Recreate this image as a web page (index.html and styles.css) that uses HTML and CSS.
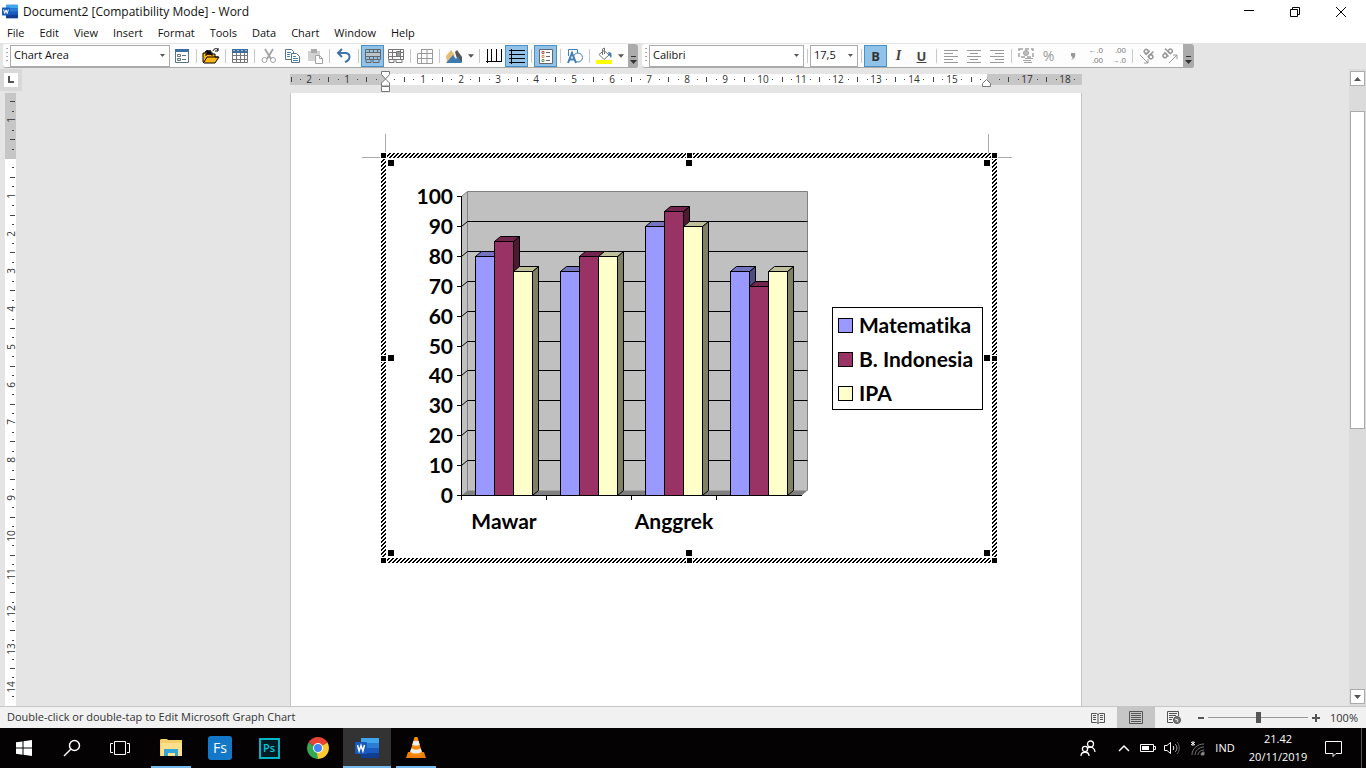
FILE: index.html
```html
<!DOCTYPE html>
<html lang="en">
<head>
<meta charset="utf-8">
<title>Document2 [Compatibility Mode] - Word</title>
<link rel="stylesheet" href="styles.css">
</head>
<body>
<svg class="defs" aria-hidden="true">
  <symbol id="word" viewBox="0 0 24 22">
    <rect x="6" y="1" width="18" height="20" rx="1" fill="#185abd"/>
    <path d="M6 1h18v5H6z" fill="#41a5ee"/><path d="M6 6h18v5H6z" fill="#2b7cd3"/><path d="M6 16h18v5H6z" fill="#103f91"/>
    <rect y="5" width="12" height="12" rx="1" fill="#185abd"/>
    <path d="M2.5 8l1.6 6L6 8.600l1.900 5.400L9.500 8" fill="none" stroke="#fff" stroke-width="1.500"/>
  </symbol>
  <symbol id="down" viewBox="0 0 7 4"><path d="M0 0h7L3.500 4z" fill="#555"/></symbol>
  <symbol id="overflow" viewBox="0 0 7 8"><path d="M1 .5h5" stroke="#333"/><path d="M0 4h7L3.500 8z" fill="#333"/></symbol>
  <symbol id="sheet" viewBox="0 0 18 18"><path d="M2 2.500h14v11H2zM2 6h14M2 9.500h14M5.500 2v12M9 2v12M12.500 2v12" fill="none" stroke="#777"/></symbol>
</svg>

<header class="titlebar">
  <svg class="app-icon"><use href="#word"/></svg>
  <h1 class="title">Document2 [Compatibility Mode] - Word</h1>
  <div class="window-controls">
    <button aria-label="Minimize"><svg width="12" height="12" fill="none" stroke="#000"><path d="M1 4.500h10"/></svg></button>
    <button aria-label="Restore"><svg width="12" height="12" fill="none" stroke="#000"><path d="M1.500 3.500h7v7h-7zM3.500 3V1.500h7v7H9"/></svg></button>
    <button aria-label="Close"><svg width="12" height="12" fill="none" stroke="#000"><path d="M1 1l10 10M11 1L1 11"/></svg></button>
  </div>
</header>

<nav class="menubar" aria-label="Menu">
  <button>File</button><button>Edit</button><button>View</button><button>Insert</button><button>Format</button><button>Tools</button><button>Data</button><button>Chart</button><button>Window</button><button>Help</button>
</nav>

<div class="toolbars">
  <div class="toolbar" role="toolbar" aria-label="Standard">
    <span class="grip"></span>
    <span class="combo combo-wide"><select aria-label="Chart objects"><option>Chart Area</option></select><svg><use href="#down"/></svg></span>
    <button class="tool" aria-label="Format object"><svg><path d="M2.500 2.500h13v13h-13z" fill="#fff" stroke="#5b7184"/><path d="M2 2h14v3H2z" fill="#3d6e9e"/><path d="M4.500 7.500h3v2h-3zM4.500 11.500h3v2h-3zM9 8.500h4M9 12.500h4" fill="none" stroke="#5b7184"/></svg></button>
    <span class="sep"></span>
    <button class="tool" aria-label="Import file"><svg><path d="M1 15V6h2l1-2h2l1 3h6v3h4l-4 6H2z" fill="#ffb516" stroke="#000"/><path d="M4 9V4.500l1-1V8l1-5 1 5 1-5 1 5V4.500l1 1V9M2 15l3-5h11" fill="none" stroke="#000"/><path d="M11 4c1-3 4-3 5-1M16 1v3h-3" fill="none" stroke="#000"/></svg></button>
    <span class="sep"></span>
    <button class="tool" aria-label="View datasheet"><svg fill="none" stroke="#777"><path d="M1.500 5v10.500h15V5M1 8.500h15M1 12.500h15M5.500 6v9M9.500 6v9M13.500 6v9"/><path d="M1 2h16v4H1z" fill="#3d6e9e" stroke="none"/><path d="M2 3.500h2M6 3.500h2M10 3.500h2M14 3.500h2" stroke="#9dbbd8"/></svg></button>
    <span class="sep"></span>
    <button class="tool" aria-label="Cut"><svg fill="none" stroke="#a3a3a3"><path d="M5 2l6 10M13 2L7 12" stroke-width="1.800"/><circle cx="4.500" cy="13" r="2.500"/><circle cx="13" cy="13" r="2.500"/></svg></button>
    <button class="tool" aria-label="Copy"><svg fill="#fff" stroke="#5b7184"><path d="M2.500 2.500h6l2 2v8h-8z"/><path d="M8.500 6.500h5l3 3v6h-8z"/><path d="M4 5.500h4M4 7.500h3M4 9.500h3M10 9.500h3M10 11.500h5M10 13.500h5" stroke="#4280b8"/></svg></button>
    <button class="tool" aria-label="Paste"><svg><path d="M2 4h12v10H2z" fill="#d2d2d2"/><path d="M5 2h6v4H5z" fill="#aaa"/><path d="M9.500 8.500h4l3 3v5h-7z" fill="#fff" stroke="#a3a3a3"/><path d="M13.500 8v3.500H17" fill="none" stroke="#a3a3a3"/></svg></button>
    <span class="sep"></span>
    <button class="tool" aria-label="Undo"><svg fill="none" stroke="#3f73a8" stroke-width="2"><path d="M7 2L3 6l4 4M3 6h7c6 0 6 7 0 9"/></svg></button>
    <span class="sep"></span>
    <button class="tool on" aria-label="By row"><svg fill="none" stroke="#666"><path d="M1.500 2.500h15v10h-15zM5.500 2v11M9.500 2v11M13.500 2v11"/><path d="M1.500 5.500h15v4h-15z" fill="#bac4cc"/><path d="M2 13v2.500h5V13M9 13v2.500h6V13"/></svg></button>
    <button class="tool" aria-label="By column"><svg fill="none" stroke="#777"><path d="M1.500 2.500h15v10h-15zM1 5.500h15M1 9.500h15M5.500 2v11M13.500 2v11"/><path d="M9.500 4.500h4v5h-4z" fill="#999"/><path d="M2 13v2.500h5V13M9 13v2.500h6V13"/></svg></button>
    <span class="sep"></span>
    <button class="tool" aria-label="Data table"><svg fill="none" stroke="#999"><path d="M5.500 2.500h11v14h-15v-10h15M1.500 11.500h15M5.500 2v14M11 2v14"/></svg></button>
    <span class="sep"></span>
    <button class="tool" aria-label="Chart type"><svg><path d="M1 9l5-6 4 5-8 7z" fill="#e3bd78"/><path d="M10 5l2-2 5 7v5h-4z" fill="#555"/><path d="M1 16l7-8 3 4 2-3 4 7z" fill="#3d78b0"/></svg></button>
    <button class="drop" aria-label="More chart types"><svg><use href="#down"/></svg></button>
    <span class="sep"></span>
    <button class="tool" aria-label="Category axis gridlines"><svg fill="none" stroke="#000"><path d="M1 14.500h16M2.500 2v14M6.500 2v12M11.500 2v12M16.500 2v12"/></svg></button>
    <button class="tool on" aria-label="Value axis gridlines"><svg fill="none" stroke="#000"><path d="M3.500 2v15M1 3.500h16M1 7.500h16M1 11.500h16M1 15.500h16"/></svg></button>
    <span class="sep"></span>
    <button class="tool on" aria-label="Legend"><svg><path d="M2.500 2.500h13v14h-13z" fill="#fff" stroke="#666"/><path d="M5 4.500h2v2H5z" fill="none" stroke="#c0504d"/><path d="M5 8.500h2v2H5z" fill="none" stroke="#e09050"/><path d="M5 12.500h2v2H5z" fill="none" stroke="#6a9a55"/><path d="M9 5.500h4M9 9.500h4M9 13.500h4" stroke="#666"/></svg></button>
    <span class="sep"></span>
    <button class="tool" aria-label="Drawing"><svg fill="none" stroke="#4280b8"><path d="M2.500 9V2.500h9V6"/><circle cx="12" cy="10.500" r="4.500"/><path d="M2 16l4-10 4 10M3.500 12.500h5" stroke-width="2"/></svg></button>
    <span class="sep"></span>
    <button class="tool" aria-label="Fill color"><svg><path d="M4 7.500l5-4 5 4.500-5 4.500z" fill="#fff" stroke="#777"/><path d="M7.500 8V2l2-1v6" fill="none" stroke="#777"/><path d="M13 5c4 0 4 3 3 6l-2-3z" fill="#3d78b0"/><path d="M1 13h16v4H1z" fill="#ff0"/></svg></button>
    <button class="drop" aria-label="More fill colors"><svg><use href="#down"/></svg></button>
    <button class="more" aria-label="Toolbar options"><svg><use href="#overflow"/></svg></button>
  </div>

  <div class="toolbar" role="toolbar" aria-label="Formatting">
    <span class="grip"></span>
    <span class="combo combo-wide"><select aria-label="Font"><option>Calibri</option></select><svg><use href="#down"/></svg></span>
    <span class="sep"></span>
    <span class="combo combo-small"><select aria-label="Font size"><option>17,5</option></select><svg><use href="#down"/></svg></span>
    <span class="sep"></span>
    <button class="tool on bold">B</button>
    <button class="tool italic">I</button>
    <button class="tool underline">U</button>
    <span class="sep"></span>
    <button class="tool" aria-label="Align left"><svg stroke="#999"><path d="M2 3.500h14M2 6.500h9M2 9.500h14M2 12.500h9M2 15.500h14"/></svg></button>
    <button class="tool" aria-label="Center"><svg stroke="#999"><path d="M2 3.500h14M5 6.500h8M2 9.500h14M5 12.500h8M2 15.500h14"/></svg></button>
    <button class="tool" aria-label="Align right"><svg stroke="#999"><path d="M2 3.500h14M7 6.500h9M2 9.500h14M7 12.500h9M2 15.500h14"/></svg></button>
    <span class="sep"></span>
    <button class="tool" aria-label="Currency"><svg fill="none" stroke="#a3a3a3"><path d="M2 2h14v8H2z" stroke-width="1.500" stroke-dasharray="4 2"/><circle cx="9" cy="6" r="2.500" fill="#bbb"/><path d="M8 11.500h8M6 13.500h8M7 15.500h8"/></svg></button>
    <button class="tool muted percent">%</button>
    <button class="tool" aria-label="Comma style"><svg><path d="M8 6h4c1 4-1 6-4 7 2-2 2-3 0-4z" fill="#999"/></svg></button>
    <button class="tool muted decimals"><span>←.0</span><span>.00</span></button>
    <button class="tool muted decimals"><span>.00</span><span>→.0</span></button>
    <span class="sep"></span>
    <button class="tool" aria-label="Angle clockwise"><svg fill="none" stroke="#999"><path d="M2 8l8 8M10 12v4H6"/><g transform="rotate(45 9 8)" stroke-width="1.500"><circle cx="6" cy="6" r="2"/><path d="M8 3v6M11 1v8"/><circle cx="13" cy="6.500" r="2"/></g></svg></button>
    <button class="tool" aria-label="Angle counterclockwise"><svg fill="none" stroke="#999"><path d="M8 16l8-8M12 8h4v4"/><g transform="rotate(-45 9 8)" stroke-width="1.500"><circle cx="5" cy="5" r="2"/><path d="M7 2v6M10 0v8"/><circle cx="12" cy="5.500" r="2"/></g></svg></button>
    <button class="more more-end" aria-label="Toolbar options"><svg><use href="#overflow"/></svg></button>
  </div>
</div>

<main class="workspace">
  <aside class="left-rail">
    <button class="tab-selector" aria-label="Tab alignment"><svg width="8" height="8"><path d="M2 0v6h5" fill="none" stroke="#555" stroke-width="2"/></svg></button>
    <svg class="v-ruler" id="v-ruler"></svg>
  </aside>

  <section class="document">
    <svg class="h-ruler" id="h-ruler" viewBox="290 69 792 24"></svg>
    <article class="page">
      <svg class="chart" id="chart" viewBox="362 134 650 430" role="img" aria-label="Column chart of Matematika, B. Indonesia and IPA">
        <defs>
          <pattern id="hatch" width="4" height="4" patternUnits="userSpaceOnUse"><rect width="4" height="4" fill="#fff"/><path d="M2 0h2v1H2zM1 1h2v1H1zM0 2h2v1H0zM0 3h1v1H0zM3 3h1v1H3z" shape-rendering="crispEdges"/></pattern>
        </defs>
      </svg>
    </article>
  </section>

  <div class="scrollbar">
    <button aria-label="Scroll up"><svg width="7" height="4"><path d="M0 4h7L3.500 0z" fill="#555"/></svg></button>
    <div class="track"><div class="thumb"></div></div>
    <button aria-label="Scroll down"><svg width="7" height="4"><use href="#down"/></svg></button>
  </div>
</main>

<div class="statusbar">
  <p class="status-text">Double-click or double-tap to Edit Microsoft Graph Chart</p>
  <button aria-label="Read mode"><svg width="14" height="12" fill="none" stroke="#555"><path d="M.5 1.500h5l1.500 1 1.500-1h5v9h-5L7 11.500l-1.500-1h-5zM7 2v9M2 3.500h3M2 5.500h3M2 7.500h3M9 3.500h3M9 5.500h3M9 7.500h3"/></svg></button>
  <button class="selected" aria-label="Print layout"><svg width="14" height="13" fill="none" stroke="#555"><path d="M.5.5h13v12H.5zM2 2.500h10M2 4.500h10M2 6.500h10M2 8.500h10M2 10.500h10"/></svg></button>
  <button aria-label="Web layout"><svg width="14" height="13" fill="none" stroke="#555"><path d="M6 11.500H.5V.5h11V5M2 2.500h8M2 4.500h7M2 6.500h4M2 8.500h3"/><circle cx="10" cy="9" r="3.500" fill="#777"/><path d="M8 8l3 1-1 2" stroke="#eee"/></svg></button>
  <div class="zoom">
    <button aria-label="Zoom out"><svg width="6" height="6"><path d="M0 3h6" stroke="#555" stroke-width="2"/></svg></button>
    <input type="range" min="0" max="100" value="50" aria-label="Zoom">
    <button aria-label="Zoom in"><svg width="8" height="8"><path d="M0 4h8M4 0v8" stroke="#555" stroke-width="2"/></svg></button>
    <button class="zoom-value">100%</button>
  </div>
</div>

<footer class="taskbar">
  <div class="system-buttons">
    <button aria-label="Start"><svg width="16" height="16" fill="#fff"><path d="M0 2.300L6.500 1.400V7.500H0zM7.500 1.200L16 0v7.500H7.500zM0 8.500h6.500v6.200L0 13.800zM7.500 8.500H16V16l-8.500-1.200z"/></svg></button>
    <button aria-label="Search"><svg width="18" height="18" fill="none" stroke="#fff" stroke-width="1.500"><circle cx="11.500" cy="6.500" r="5"/><path d="M8 10l-7 7"/></svg></button>
    <button aria-label="Task view"><svg width="20" height="16" fill="none" stroke="#fff"><path d="M4.500 1.500h11v13h-11zM3 3.500H.5v9H3M17 3.500h2.500v9H17"/></svg></button>
  </div>
  <div class="apps">
    <button class="open" aria-label="File Explorer"><svg width="22" height="20"><path d="M0 2l1-1h6l1 1h14v16H0z" fill="#f5cf67"/><path d="M1 5h21v13H1z" fill="#fde08d"/><path d="M4 18v-7h14v7h-3v-3H8v3z" fill="#35a5d8"/></svg></button>
    <button aria-label="Fs"><span class="fs-logo">Fs</span></button>
    <button aria-label="Photoshop"><span class="ps-logo">Ps</span></button>
    <button aria-label="Chrome"><svg width="22" height="22" viewBox="-11 -11 22 22"><path d="M0 0L-9.500-5.500A11 11 0 0 1 9.500-5.500z" fill="#e94335"/><path d="M0 0L9.500-5.500A11 11 0 0 1 0 11z" fill="#fcc934"/><path d="M0 0v11A11 11 0 0 1-9.500-5.500z" fill="#34a853"/><path d="M0-5h9.800L9 -6-2-6z" fill="#e94335"/><path d="M4.300 2.500L0 11-1 5z" fill="#fcc934"/><circle r="5" fill="#fff"/><circle r="4" fill="#4285f4"/></svg></button>
    <button class="open current" aria-label="Word"><svg width="24" height="22"><use href="#word"/></svg></button>
    <button class="open" aria-label="VLC"><svg width="20" height="24"><path d="M2 16h16l2 6H0z" fill="#f07d0a"/><path d="M8.500 1h3l5 17c-3 3-10 3-13 0z" fill="#f58a10"/><path d="M7.300 5h5.400l1 4c-2 1-5 1-7.400 0zM5.200 12.500c3 1.500 6.600 1.500 9.600 0l1 3.500c-4 2-8 2-11.600 0z" fill="#eee"/></svg></button>
  </div>
  <div class="tray">
    <button class="people" aria-label="People"><svg width="16" height="17" fill="none" stroke="#fff" stroke-width="1.300"><circle cx="10.500" cy="4" r="3"/><path d="M8 8c3-2 7 0 7 4"/><circle cx="5" cy="9" r="2.600"/><path d="M1 16c0-5 8-5 8 0"/></svg></button>
    <button aria-label="Show hidden icons"><svg width="12" height="8" fill="none" stroke="#fff" stroke-width="1.500"><path d="M1 7l5-5 5 5"/></svg></button>
    <button aria-label="Battery"><svg width="16" height="10"><path d="M.5 1.500h13v7H.5zM14 3.500h1.500v3H14" fill="none" stroke="#fff"/><path d="M2 3h7v4H2z" fill="#fff"/></svg></button>
    <button aria-label="Volume"><svg width="16" height="14" fill="none" stroke="#fff"><path d="M.5 4.500H3l3.500-3v11L3 9.500H.5zM9 5c1 1 1 3 0 4"/><path d="M11 3c2.500 2 2.500 6 0 8" stroke="#aaa"/><path d="M13 1c3 3 3 9 0 12" stroke="#666"/></svg></button>
    <button class="wifi" aria-label="Network"><svg width="17" height="17" fill="none" stroke="#777"><path d="M3 2l4 3M7 2L3 5M5 1v5" stroke="#fff"/><path d="M4 15C4 9 9 4 16 4M7 15c0-4 4-8 9-8M10 15c0-3 3-5 6-5"/><path d="M13 15c0-2 1-3 3-3v3z" fill="#999"/></svg></button>
    <button class="lang">IND</button>
    <button class="clock"><time>21.42</time><time datetime="2019-11-20">20/11/2019</time></button>
    <button class="notify" aria-label="Notifications"><svg width="17" height="17" fill="none" stroke="#fff"><path d="M.5 1.500h16v12H11l-3 3v-3H.5z"/></svg></button>
    <button class="peek" aria-label="Show desktop"></button>
  </div>
</footer>
<script src="main.js"></script>
</body>
</html>
```

FILE: styles.css
```css
* { box-sizing: border-box; }
body {
  margin: 0;
  height: 100vh;
  display: flex;
  flex-direction: column;
  overflow: hidden;
  background: #fff;
  color: #111;
  font: 12px/16px "Open Sans", "Noto Sans", sans-serif;
}
button, select, input { margin: 0; padding: 0; border: 0; background: none; color: inherit; font: inherit; }
button { display: flex; align-items: center; justify-content: center; }
svg { display: block; flex: none; }
.defs { display: none; }

.titlebar { display: flex; align-items: center; flex: none; height: 23px; padding-left: 2px; }
.app-icon { width: 16px; height: 15px; }
.title { flex: 1; margin: 0 0 0 5px; font-size: 12px; font-weight: 400; }
.window-controls { display: flex; padding-right: 2px; }
.window-controls button { width: 46px; height: 20px; }

.menubar { display: flex; flex: none; height: 20px; padding-left: 7px; gap: 15px; font-size: 11px; }

.toolbars { display: flex; flex: none; height: 26px; padding: 1px 3px; gap: 4px; background: #e5e5e5; }
.toolbar { display: flex; align-items: center; height: 24px; background: #fdfdfd; border-bottom: 1px solid #aaa; border-radius: 3px; }
.grip { width: 2px; height: 16px; margin: 0 2px 0 3px; background: repeating-linear-gradient(#aaa 0 1px, transparent 1px 4px); }
.combo { display: grid; align-items: center; height: 22px; border: 1px solid #ababab; background: #fff; }
.combo select { grid-area: 1 / 1; width: 100%; height: 20px; padding: 0 0 2px 3px; appearance: none; font-size: 11px; }
.combo svg { grid-area: 1 / 1; justify-self: end; width: 5px; height: 3px; margin-right: 4px; pointer-events: none; }
.combo-wide { width: 160px; }
.toolbar + .toolbar .combo-wide { width: 155px; }
.combo-small { width: 48px; }
.sep { width: 6px; height: 14px; background: linear-gradient(#c8c8c8, #c8c8c8) center / 1px 100% no-repeat; }
.tool { width: 23px; height: 22px; font-size: 13px; }
.tool svg { width: 18px; height: 18px; }
.on { background: #91c3e8; border: 1px solid #4a90c4; }
.bold { font-weight: 700; color: #333; }
.italic { font: italic 700 14px "Liberation Serif", serif; color: #444; }
.underline { font-weight: 700; text-decoration: underline; color: #444; }
.muted { color: #999; }
.percent { font-size: 14px; }
.decimals { flex-direction: column; align-items: flex-end; padding-right: 3px; font: 8px/10px "Liberation Sans", sans-serif; color: #777; }
.decimals span { height: 10px; }
.drop { width: 11px; height: 22px; }
.drop svg { width: 6px; height: 4px; }
.more { align-items: flex-end; width: 10px; height: 24px; margin-left: 2px; padding-bottom: 4px; background: #ababab; border-radius: 0 3px 3px 0; }
.more svg { width: 7px; height: 8px; }
.more-end { width: 11px; }

.workspace { flex: 1; min-height: 0; display: grid; grid-template-columns: 23px 1fr 17px; background: #e5e5e5; }
.left-rail { display: flex; flex-direction: column; min-height: 0; }
.tab-selector { flex: none; width: 22px; height: 22px; margin-bottom: 2px; background: #fff; border: 4px solid #d8d8d8; }
.v-ruler { flex: 1; min-height: 0; width: 11px; margin-left: 5px; background: #fff; overflow: visible; }
.document { display: flex; flex-direction: column; align-items: center; min-width: 0; min-height: 0; }
.h-ruler { width: 792px; height: 24px; }
.ruler-text { font: 10px "Open Sans", "Noto Sans", sans-serif; fill: #333; text-anchor: middle; }
.page { flex: 1; width: 792px; padding: 41px 0 0 72px; background: #fff; border: solid #c6c6c6; border-width: 0 1px; }
.chart { width: 650px; height: 430px; margin-left: -1px; }
.chart-text { font: 700 21px Lato, Carlito, sans-serif; font-variant-ligatures: none; fill: #000; }

.scrollbar { display: flex; flex-direction: column; padding: 2px 1px; background: #dbdbdb; }
.scrollbar button { height: 15px; background: #fff; border: 1px solid #ababab; }
.track { flex: 1; padding-top: 25px; }
.thumb { height: 55%; background: #fff; border: 1px solid #ababab; }

.statusbar { display: flex; flex: none; height: 22px; background: #f1f1f1; border-top: 1px solid #c6c6c6; font-size: 11px; color: #333; }
.status-text { flex: 1; margin: 0; padding-left: 7px; line-height: 20px; }
.statusbar > button { width: 38px; }
.statusbar .selected { background: #c6c6c6; }
.zoom { display: flex; align-items: center; gap: 4px; padding: 0 8px 0 5px; }
.zoom input { width: 100px; height: 14px; appearance: none; background: linear-gradient(#999, #999) center / 100% 1px no-repeat; }
.zoom input::-webkit-slider-thumb { appearance: none; width: 5px; height: 11px; background: #555; }
.zoom-value { margin-left: 6px; }

.taskbar { display: flex; flex: none; height: 40px; background: #040202; color: #fff; }
.system-buttons, .apps, .tray { display: flex; }
.system-buttons button { width: 48px; }
.apps { flex: 1; gap: 1px; padding-left: 3px; }
.apps button { width: 48px; }
.open { background: linear-gradient(#76b9ed, #76b9ed) bottom / 40px 2px no-repeat; }
.current { background: linear-gradient(#76b9ed, #76b9ed) bottom / 100% 2px no-repeat #333; }
.fs-logo { width: 24px; height: 24px; background: #1478c8; border-radius: 3px; font-size: 14px; line-height: 24px; }
.ps-logo { width: 21px; height: 21px; background: #001d26; border: 2px solid #00b5c8; color: #00c8dc; font-size: 11px; font-weight: 600; line-height: 16px; }
.tray button { width: 24px; }
.tray .people { width: 48px; }
.tray .lang { width: 34px; font-size: 11px; }
.tray .clock { flex-direction: column; width: 72px; font-size: 11px; line-height: 18px; }
.tray .notify { width: 38px; }
.tray .peek { width: 5px; margin-left: 9px; border-left: 1px solid #555; }
```

FILE: main.js
```js
const NS = 'http://www.w3.org/2000/svg';

function add(parent, tag, attrs, text) {
  const node = document.createElementNS(NS, tag);
  for (const key in attrs) node.setAttribute(key, attrs[key]);
  if (text !== undefined) node.textContent = text;
  parent.appendChild(node);
  return node;
}

const CM = 37.78;

function drawHorizontalRuler() {
  const svg = document.getElementById('h-ruler');
  add(svg, 'rect', { x: 290, y: 74, width: 792, height: 11, fill: '#fff' });
  add(svg, 'rect', { x: 290, y: 74, width: 95, height: 11, fill: '#c6c6c6' });
  add(svg, 'rect', { x: 987, y: 74, width: 95, height: 11, fill: '#c6c6c6' });
  for (let q = -10; q <= 73; q++) {
    const x = Math.round(385 + q * CM / 4);
    const part = ((q % 4) + 4) % 4;
    if (q === 0 || q === 64) continue;
    if (part === 0) add(svg, 'text', { x, y: 83, class: 'ruler-text' }, Math.abs(q / 4));
    else if (part === 2) add(svg, 'rect', { x, y: 77, width: 1, height: 5, fill: '#444' });
    else add(svg, 'rect', { x, y: 79, width: 1, height: 1, fill: '#444' });
  }
  const marker = { fill: '#fff', stroke: '#777' };
  add(svg, 'path', { d: 'M381.500 71.500h8v3l-4 4.500 4 4v3h-8v-3l4-4-4-4.500zM381.500 86.500h8v5h-8z', ...marker });
  add(svg, 'path', { d: 'M982.500 86.500v-3l4-4 4 4v3z', ...marker });
}

function drawVerticalRuler() {
  const svg = document.getElementById('v-ruler');
  add(svg, 'rect', { x: 0, y: 0, width: 11, height: 66, fill: '#c6c6c6' });
  for (let q = -6; q <= 57; q++) {
    const y = Math.round(65 + q * CM / 4);
    const part = ((q % 4) + 4) % 4;
    if (q === 0) continue;
    if (part === 0) {
      add(svg, 'text', { x: 0, y: 0, transform: `translate(10 ${y}) rotate(-90)`, class: 'ruler-text' }, Math.abs(q / 4));
    } else if (part === 2) add(svg, 'rect', { x: 5, y, width: 5, height: 1, fill: '#444' });
    else add(svg, 'rect', { x: 7, y, width: 2, height: 1, fill: '#444' });
  }
}

const series = [
  { name: 'Matematika', face: '#9999ff', top: '#7373bf', side: '#4d4d80', values: [80, 75, 90, 75] },
  { name: 'B. Indonesia', face: '#993366', top: '#73264d', side: '#4d1a33', values: [85, 80, 95, 70] },
  { name: 'IPA', face: '#ffffcc', top: '#bfbf99', side: '#808066', values: [75, 80, 90, 75] }
];

function drawChart() {
  const svg = document.getElementById('chart');
  const level = value => Math.round(495 - value * 2.99) + 0.5;

  add(svg, 'path', { d: 'M385.500 134v19M362 157.500h19M988.500 134v19M997 157.500h15', stroke: '#aaa' });
  add(svg, 'path', { d: 'M381 153h616v410H381zM386 158v400h606V158z', fill: 'url(#hatch)', 'fill-rule': 'evenodd' });
  for (const x of [383, 689, 994]) {
    for (const y of [155, 358, 560]) {
      if (x === 689 && y === 358) continue;
      add(svg, 'rect', { x: x - 3, y: y - 3, width: 7, height: 7, fill: '#fff' });
      add(svg, 'rect', { x: x - 2, y: y - 2, width: 5, height: 5 });
      const inX = x === 383 ? 391 : x === 994 ? 987 : 689;
      const inY = y === 155 ? 163 : y === 560 ? 553 : 358;
      add(svg, 'rect', { x: inX - 3, y: inY - 3, width: 6, height: 6 });
    }
  }

  add(svg, 'path', { d: 'M461.500 196.500l6-5h340v299l-6 5h-340z', fill: '#c0c0c0' });
  add(svg, 'path', { d: 'M461.500 495.500l6-5h340l-6 5z', fill: '#808080' });
  add(svg, 'path', { d: 'M461.500 196.500l6-5h340v299M467.500 191.500v299', fill: 'none', stroke: '#808080' });
  for (let value = 0; value <= 100; value += 10) {
    const y = level(value);
    if (value > 0 && value < 100) add(svg, 'path', { d: `M461.500 ${y}l6-5h340`, fill: 'none', stroke: '#000' });
    add(svg, 'path', { d: `M457 ${y}h5`, stroke: '#000' });
    add(svg, 'text', { x: 453, y: y + 7.5, class: 'chart-text', 'text-anchor': 'end' }, value);
  }

  for (let group = 0; group < 4; group++) {
    series.forEach((item, i) => {
      const x = 475.5 + group * 85 + i * 19;
      const y = level(item.values[group]);
      const height = 495.5 - y;
      add(svg, 'path', { d: `M${x + 19} ${y}l6-5v${height}l-6 5z`, fill: item.side, stroke: '#000' });
      add(svg, 'path', { d: `M${x} ${y}l6-5h19l-6 5z`, fill: item.top, stroke: '#000' });
      add(svg, 'rect', { x, y, width: 19, height, fill: item.face, stroke: '#000' });
    });
  }
  add(svg, 'path', { d: 'M461.500 196v304M461 495.500h341M546.500 495v5M631.500 495v5M716.500 495v5', fill: 'none', stroke: '#000' });
  add(svg, 'text', { x: 504, y: 529, class: 'chart-text', 'text-anchor': 'middle' }, 'Mawar');
  add(svg, 'text', { x: 674, y: 529, class: 'chart-text', 'text-anchor': 'middle' }, 'Anggrek');

  add(svg, 'rect', { x: 832.5, y: 307.5, width: 150, height: 102, fill: '#fff', stroke: '#000' });
  series.forEach((item, i) => {
    const y = 318.5 + i * 34;
    add(svg, 'rect', { x: 838.5, y, width: 14, height: 14, fill: item.face, stroke: '#000' });
    add(svg, 'text', { x: 859, y: y + 14.5, class: 'chart-text' }, item.name);
  });
}

drawHorizontalRuler();
drawVerticalRuler();
drawChart();
```
